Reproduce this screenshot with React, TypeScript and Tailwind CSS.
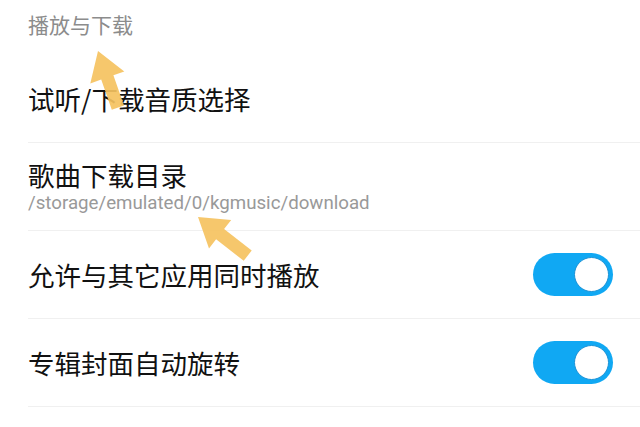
import React from "react";

const font = { fontFamily: '"Noto Sans CJK SC", "Noto Sans", sans-serif' };

function Toggle() {
  return (
    <div className="mr-[27px] flex h-[43px] w-[80px] shrink-0 items-center justify-end rounded-full bg-[#10a8f3] pr-[4px]">
      <div className="h-[35px] w-[35px] rounded-full border border-[#1b92d6] bg-white" />
    </div>
  );
}

function Row({ children, toggle }: { children: React.ReactNode; toggle?: boolean }) {
  return (
    <div className="ml-[28px] flex h-[88px] items-center justify-between border-b border-[#f0f0f0]">
      <div className="flex flex-col">{children}</div>
      {toggle && <Toggle />}
    </div>
  );
}

export default function App() {
  return (
    <div className="relative h-[427px] w-[640px] overflow-hidden bg-white" style={font}>
      <div className="h-[55px] pl-[28px] pt-[11px] text-[21px] leading-[27px] text-[#8c8c8c]">播放与下载</div>
      <Row>
        <span className="text-[26.5px] leading-[34px] text-[#111]">试听/下载音质选择</span>
      </Row>
      <Row>
        <span className="text-[26.5px] leading-[32px] text-[#111]">歌曲下载目录</span>
        <span className="text-[18.7px] leading-[24px] text-[#999]" style={{ fontFamily: 'Roboto, "Noto Sans", sans-serif' }}>
          /storage/emulated/0/kgmusic/download
        </span>
      </Row>
      <Row toggle>
        <span className="text-[26.5px] leading-[34px] text-[#111]">允许与其它应用同时播放</span>
      </Row>
      <Row toggle>
        <span className="text-[26.5px] leading-[34px] text-[#111]">专辑封面自动旋转</span>
      </Row>
      <svg className="pointer-events-none absolute left-0 top-0" width="640" height="427" viewBox="0 0 640 427">
        <polygon
          points="98,51 124.3,71.4 113.4,75.2 124,105.5 111.8,109.8 101.2,79.6 90.3,83.4"
          fill="#f5c260"
          opacity="0.92"
        />
        <polygon
          points="198,217 231.2,220 224.1,229.1 251.7,250.6 243.7,260.8 216.1,239.3 209,248.4"
          fill="#f5c260"
          opacity="0.92"
        />
      </svg>
    </div>
  );
}
